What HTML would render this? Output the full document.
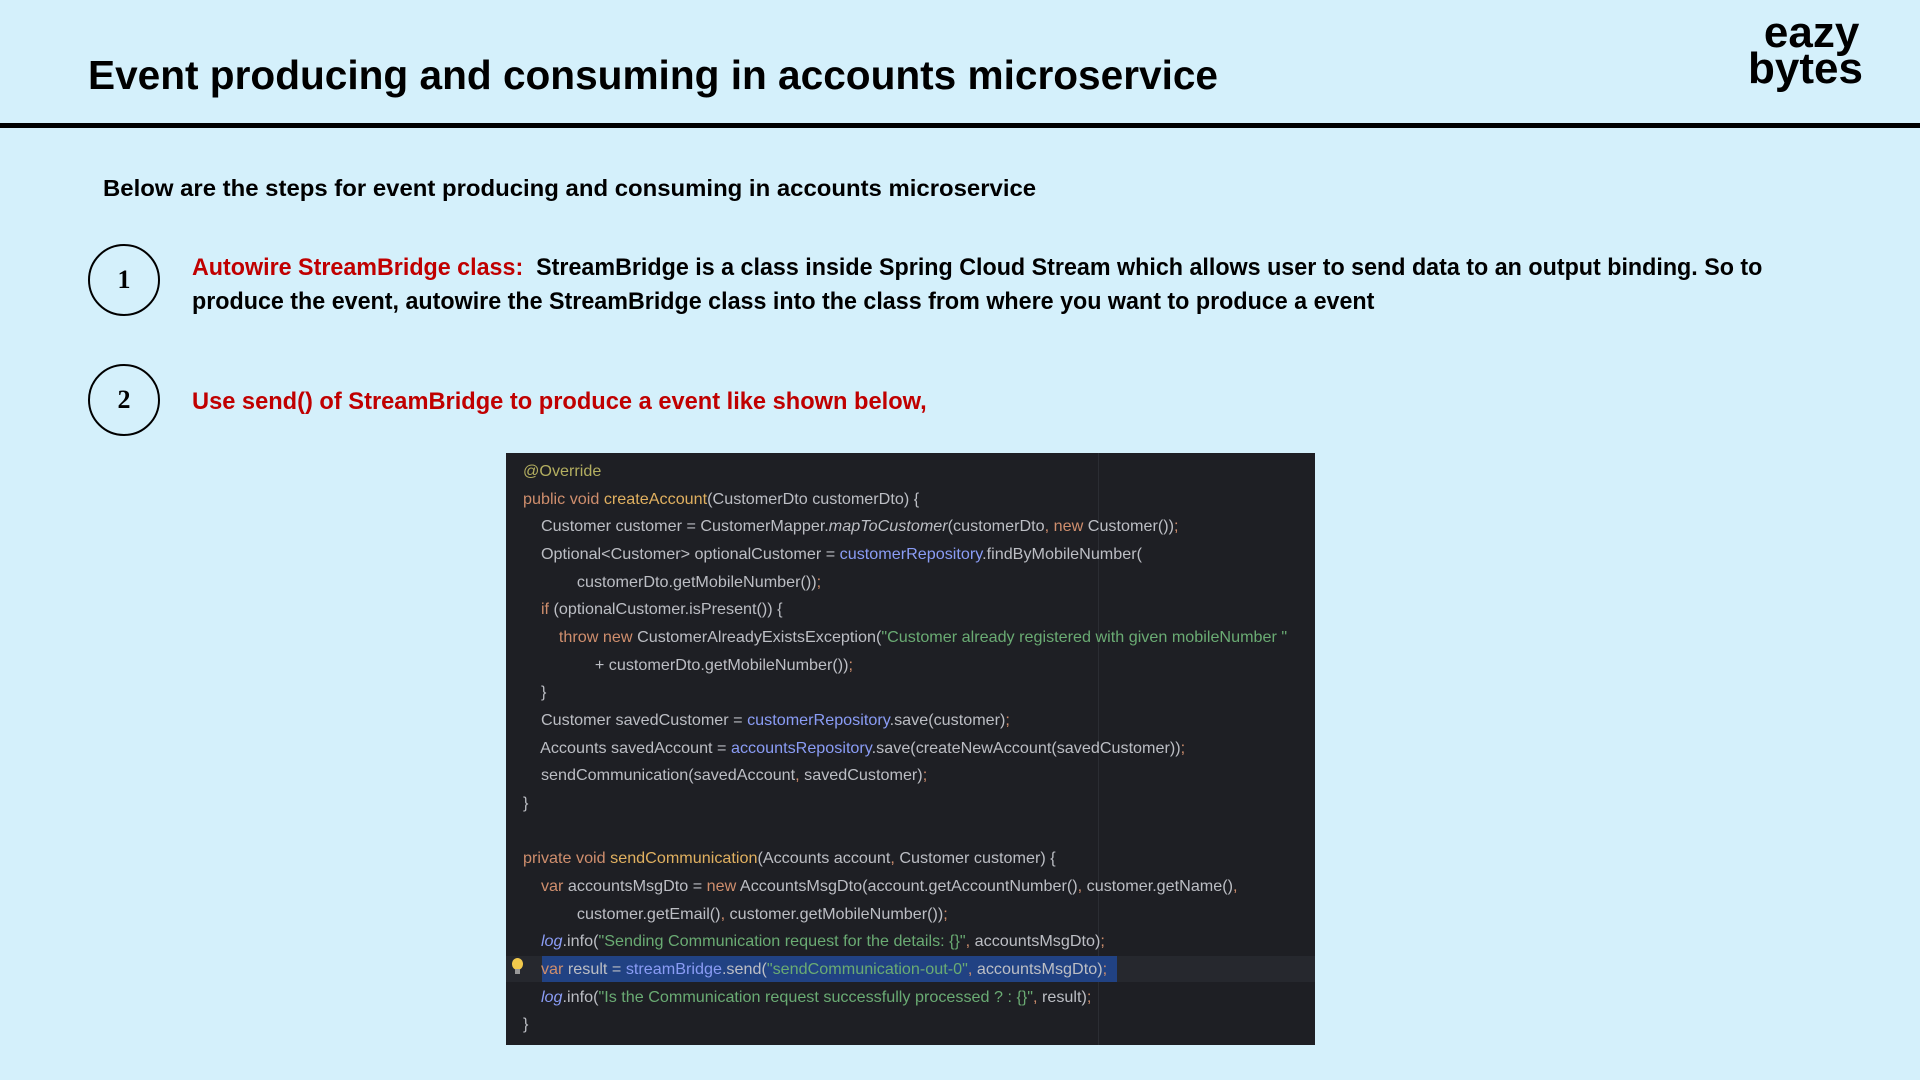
<!DOCTYPE html>
<html><head><meta charset="utf-8"><style>
*{margin:0;padding:0;box-sizing:border-box}
body{width:1920px;height:1080px;background:#d4f0fb;position:relative;overflow:hidden;font-family:"Liberation Sans",sans-serif}
.t{position:absolute;white-space:nowrap;font-weight:bold;transform-origin:0 0}
.circ{position:absolute;width:72px;height:72px;border:2px solid #000;border-radius:50%;font:bold 26px "Liberation Serif",serif;display:flex;align-items:center;justify-content:center}
.code{position:absolute;left:506px;top:453px;width:809px;height:592px;background:#1e1f24}
.l{position:absolute;left:17px;white-space:pre;font:16px "Liberation Sans",sans-serif;color:#bcbec4;transform:scaleX(1.01);transform-origin:0 0}
.k{color:#cf8e6d}.f{color:#e0b060}.b{color:#8a9cf5}.s{color:#6aab73}.a{color:#b3ae60}.i{font-style:italic;color:#8a9cf5}
</style></head><body>
<div class="t" style="left:88px;top:52px;font-size:41px;transform:scaleX(0.99)">Event producing and consuming in accounts microservice</div>
<div style="position:absolute;left:0;top:123px;width:1920px;height:5px;background:#000"></div>
<div class="t" style="left:1748px;top:15px;font-size:44px;line-height:36px;text-align:center;transform:scaleX(1.0)">&nbsp;eazy<br>bytes</div>
<div class="t" style="left:103px;top:175px;font-size:23px;transform:scaleX(1.04)">Below are the steps for event producing and consuming in accounts microservice</div>
<div class="circ" style="left:88px;top:244px">1</div>
<div class="circ" style="left:88px;top:364px">2</div>
<div class="t" style="left:192px;top:251px;font-size:24px;line-height:34px;transform:scaleX(0.97)"><span style="color:#c00000">Autowire StreamBridge class:</span>&nbsp; StreamBridge is a class inside Spring Cloud Stream which allows user to send data to an output binding. So to<br>produce the event, autowire the StreamBridge class into the class from where you want to produce a event</div>
<div class="t" style="left:192px;top:388px;font-size:24px;color:#c00000;transform:scaleX(0.985)">Use send() of StreamBridge to produce a event like shown below,</div>
<div class="code">
<div style="position:absolute;left:592px;top:0;width:1px;height:592px;background:#2b2d33"></div>
<div style="position:absolute;left:0;top:503px;width:809px;height:26px;background:#26282e"></div>
<div style="position:absolute;left:36px;top:503px;width:575px;height:26px;background:#214283"></div>
<div style="position:absolute;left:6px;top:505px;width:11px;height:12px;border-radius:50%;background:#f2c94c"></div>
<div style="position:absolute;left:9px;top:516px;width:5px;height:5px;background:#999"></div>
<div class="l" style="top:10px"><span class="a">@Override</span></div>
<div class="l" style="top:38px"><span class="k">public void </span><span class="f">createAccount</span>(CustomerDto customerDto) {</div>
<div class="l" style="top:65px">    Customer customer = CustomerMapper.<i>mapToCustomer</i>(customerDto<span class="k">, new </span>Customer())<span class="k">;</span></div>
<div class="l" style="top:93px">    Optional&lt;Customer&gt; optionalCustomer = <span class="b">customerRepository</span>.findByMobileNumber(</div>
<div class="l" style="top:121px">            customerDto.getMobileNumber())<span class="k">;</span></div>
<div class="l" style="top:148px">    <span class="k">if </span>(optionalCustomer.isPresent()) {</div>
<div class="l" style="top:176px">        <span class="k">throw new </span>CustomerAlreadyExistsException(<span class="s">"Customer already registered with given mobileNumber "</span></div>
<div class="l" style="top:204px">                + customerDto.getMobileNumber())<span class="k">;</span></div>
<div class="l" style="top:231px">    }</div>
<div class="l" style="top:259px">    Customer savedCustomer = <span class="b">customerRepository</span>.save(customer)<span class="k">;</span></div>
<div class="l" style="top:287px">    Accounts savedAccount = <span class="b">accountsRepository</span>.save(createNewAccount(savedCustomer))<span class="k">;</span></div>
<div class="l" style="top:314px">    sendCommunication(savedAccount<span class="k">, </span>savedCustomer)<span class="k">;</span></div>
<div class="l" style="top:342px">}</div>
<div class="l" style="top:397px"><span class="k">private void </span><span class="f">sendCommunication</span>(Accounts account<span class="k">, </span>Customer customer) {</div>
<div class="l" style="top:425px">    <span class="k">var </span>accountsMsgDto = <span class="k">new </span>AccountsMsgDto(account.getAccountNumber()<span class="k">, </span>customer.getName()<span class="k">,</span></div>
<div class="l" style="top:453px">            customer.getEmail()<span class="k">, </span>customer.getMobileNumber())<span class="k">;</span></div>
<div class="l" style="top:480px">    <span class="i">log</span>.info(<span class="s">"Sending Communication request for the details: {}"</span><span class="k">, </span>accountsMsgDto)<span class="k">;</span></div>
<div class="l" style="top:508px">    <span class="k">var </span>result = <span class="b">streamBridge</span>.send(<span class="s">"sendCommunication-out-0"</span><span class="k">, </span>accountsMsgDto)<span class="k">;</span></div>
<div class="l" style="top:536px">    <span class="i">log</span>.info(<span class="s">"Is the Communication request successfully processed ? : {}"</span><span class="k">, </span>result)<span class="k">;</span></div>
<div class="l" style="top:563px">}</div>
</div>
</body></html>
